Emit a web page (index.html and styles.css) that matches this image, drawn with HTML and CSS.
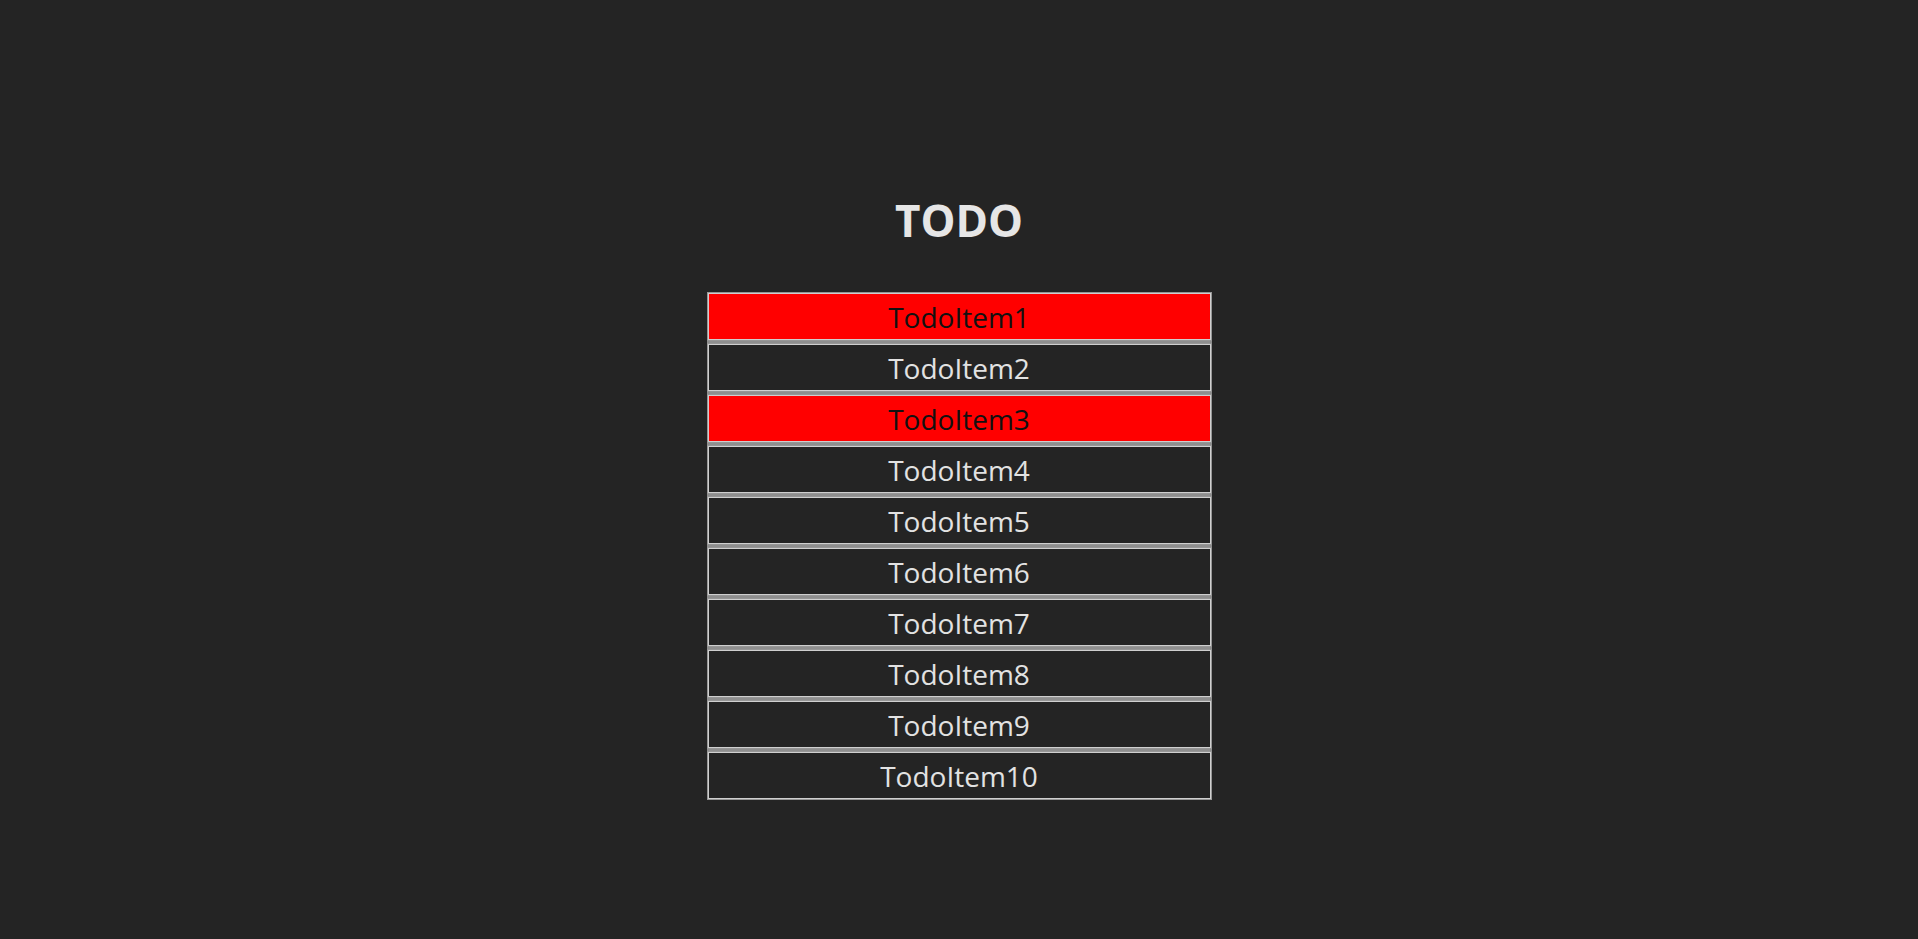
FILE: index.html
```html
<!DOCTYPE html>
<html lang="en">
<head>
<meta charset="utf-8">
<title>TODO</title>
<link rel="stylesheet" href="styles.css">
</head>
<body>
<main class="app">
  <h1 class="title">TODO</h1>
  <ul class="list">
    <li class="item done">TodoItem1</li>
    <li class="item">TodoItem2</li>
    <li class="item done">TodoItem3</li>
    <li class="item">TodoItem4</li>
    <li class="item">TodoItem5</li>
    <li class="item">TodoItem6</li>
    <li class="item">TodoItem7</li>
    <li class="item">TodoItem8</li>
    <li class="item">TodoItem9</li>
    <li class="item">TodoItem10</li>
  </ul>
</main>
</body>
</html>
```

FILE: styles.css
```css
html, body {
  margin: 0;
  padding: 0;
  background: #242424;
  height: 100%;
}
body {
  font-family: "Open Sans", "Noto Sans", sans-serif;
  color: #e2e2e2;
}
.app {
  display: flex;
  flex-direction: column;
  align-items: center;
  padding-top: 194px;
}
.title {
  margin: 0;
  font-size: 44px;
  line-height: 52px;
  font-weight: 700;
  color: #e6e6e6;
}
.list {
  list-style: none;
  margin: 46px 0 0;
  padding: 0;
  width: 505px;
  display: flex;
  flex-direction: column;
  gap: 2px;
  background: #8e8e8e;
}
.item {
  box-sizing: border-box;
  height: 49px;
  padding-top: 1px;
  border: 1px solid #969696;
  box-shadow: inset 0 0 0 1px #cfcfcf;
  background: #242424;
  text-align: center;
  font-size: 28px;
  line-height: 46px;
  color: #e2e2e2;
}
.item.done {
  background: #ff0000;
  color: #111111;
}
```
